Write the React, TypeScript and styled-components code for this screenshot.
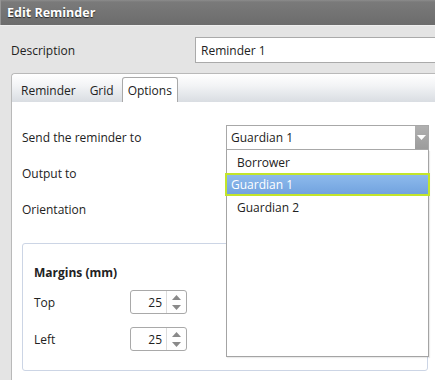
import React from 'react';
import styled, { createGlobalStyle } from 'styled-components';

const Global = createGlobalStyle`
  html, body { margin: 0; padding: 0; }
  body {
    font-family: "Open Sans", "Noto Sans", sans-serif;
    font-size: 12px;
    color: #222;
  }
`;

const Screen = styled.div`
  width: 435px;
  height: 380px;
  overflow: hidden;
  background: #e4e4e4;
  display: flex;
  flex-direction: column;
`;

const TitleBar = styled.div`
  flex: none;
  height: 25px;
  box-sizing: border-box;
  padding-left: 6px;
  display: flex;
  align-items: center;
  background: linear-gradient(#8c8c8c 0, #7a7a7a 2px, #6c6c6c 100%);
  border-left: 1px solid #959595;
  color: #fff;
  font-weight: 700;
  font-size: 12.5px;
  text-shadow: 0 1px 1px rgba(0, 0, 0, 0.65);
`;

const Body = styled.div`
  flex: 1;
  display: flex;
  flex-direction: column;
  padding: 11px 0 0 11px;
  border-top: 1px solid #eeeeee;
`;

const DescRow = styled.div`
  display: flex;
  align-items: center;
  height: 26px;
  flex: none;
`;

const Label = styled.div<{ $w: number }>`
  width: ${(p) => p.$w}px;
  flex: none;
`;

const TextBox = styled.div`
  width: 260px;
  flex: none;
  height: 26px;
  box-sizing: border-box;
  border: 1px solid #aaaaaa;
  border-right: none;
  background: #fff;
  padding-left: 5px;
  display: flex;
  align-items: center;
`;

const TabPanel = styled.div`
  margin-top: 10px;
  width: 440px;
  flex: 1;
  box-sizing: border-box;
  border: 1px solid #b9b9b9;
  border-right: none;
  border-bottom: none;
  border-radius: 4px 0 0 0;
  background: #fff;
  display: flex;
  flex-direction: column;
`;

const TabHeader = styled.div`
  height: 28px;
  flex: none;
  display: flex;
  align-items: flex-end;
  gap: 2px;
  padding-left: 3px;
  background: linear-gradient(#ffffff 0%, #f3f4f6 40%, #d9dde2 100%);
  border-radius: 4px 0 0 0;
`;

const Tab = styled.div<{ $active?: boolean }>`
  height: 25px;
  box-sizing: border-box;
  padding: 0 5px;
  display: flex;
  align-items: center;
  border: 1px solid ${(p) => (p.$active ? '#a9a9a9' : 'transparent')};
  border-bottom: none;
  border-radius: 3px 3px 0 0;
  background: ${(p) => (p.$active ? '#fff' : 'transparent')};
`;

const Content = styled.div`
  padding: 23px 0 0 10px;
  display: flex;
  flex-direction: column;
`;

const FormRow = styled.div<{ $gap: number }>`
  display: flex;
  align-items: center;
  height: 24px;
  margin-top: ${(p) => p.$gap}px;
  position: relative;
  z-index: ${(p) => (p.$gap === 0 ? 2 : 1)};
`;

const SelectWrap = styled.div`
  position: relative;
  width: 203px;
  height: 25px;
  align-self: flex-start;
`;

const SelectBox = styled.div`
  height: 25px;
  box-sizing: border-box;
  border: 1px solid #a8a8a8;
  background: #fff;
  display: flex;
  align-items: center;
  padding-left: 4px;
`;

const SelectText = styled.div`
  flex: 1;
`;

const ArrowButton = styled.div`
  width: 13px;
  align-self: stretch;
  background: linear-gradient(#b0b0b0, #9c9c9c);
  display: flex;
  align-items: center;
  justify-content: center;
`;

const DropList = styled.div`
  position: absolute;
  top: 25px;
  left: 0;
  width: 203px;
  height: 207px;
  box-sizing: border-box;
  border: 1px solid #a4a4a4;
  border-top: none;
  background: #fff;
  padding-top: 1px;
  display: flex;
  flex-direction: column;
  box-shadow: 1px 1px 1px rgba(0, 0, 0, 0.08);
`;

const Item = styled.div<{ $selected?: boolean }>`
  display: flex;
  align-items: center;
  box-sizing: border-box;
  ${(p) =>
    p.$selected
      ? `
    height: 23px;
    margin: 0 -2px;
    padding-left: 4px;
    border: 2px solid #c3e52b;
    background: linear-gradient(#8dbaec, #72a3df);
    color: #fff;
  `
      : `
    height: 22px;
    padding-left: 10px;
  `}
`;

const GroupBox = styled.div`
  margin-top: 22px;
  width: 406px;
  height: 128px;
  box-sizing: border-box;
  border: 1px solid #ccd5e5;
  border-radius: 3px;
  padding: 21px 0 0 11px;
  display: flex;
  flex-direction: column;
`;

const GroupTitle = styled.div`
  font-weight: 700;
  height: 16px;
  line-height: 16px;
`;

const SpinRow = styled.div<{ $gap: number }>`
  display: flex;
  align-items: center;
  height: 24px;
  margin-top: ${(p) => p.$gap}px;
`;

const Spinner = styled.div`
  width: 57px;
  height: 24px;
  box-sizing: border-box;
  border: 1px solid #a9a9a9;
  border-radius: 3px;
  display: flex;
  background: #fff;
`;

const SpinValue = styled.div`
  flex: 1;
  display: flex;
  align-items: center;
  justify-content: flex-end;
  padding-right: 4px;
`;

const SpinArrows = styled.div`
  width: 19px;
  border-left: 1px solid #dcdcdc;
  display: flex;
  flex-direction: column;
  align-items: center;
  justify-content: center;
  gap: 5px;
`;

const Tri = ({ up, color }: { up?: boolean; color: string }) => (
  <svg width="9" height="5" viewBox="0 0 9 5">
    <polygon points={up ? '0,5 4.5,0 9,5' : '0,0 9,0 4.5,5'} fill={color} />
  </svg>
);

export default function App() {
  return (
    <>
      <Global />
      <Screen>
        <TitleBar>Edit Reminder</TitleBar>
        <Body>
          <DescRow>
            <Label $w={184}>Description</Label>
            <TextBox>Reminder 1</TextBox>
          </DescRow>
          <TabPanel>
            <TabHeader>
              <Tab>Reminder</Tab>
              <Tab>Grid</Tab>
              <Tab $active>Options</Tab>
            </TabHeader>
            <Content>
              <FormRow $gap={0}>
                <Label $w={204}>Send the reminder to</Label>
                <SelectWrap>
                  <SelectBox>
                    <SelectText>Guardian 1</SelectText>
                    <ArrowButton>
                      <Tri color="#fff" />
                    </ArrowButton>
                  </SelectBox>
                  <DropList>
                    <Item>Borrower</Item>
                    <Item $selected>Guardian 1</Item>
                    <Item>Guardian 2</Item>
                  </DropList>
                </SelectWrap>
              </FormRow>
              <FormRow $gap={12}>
                <Label $w={204}>Output to</Label>
              </FormRow>
              <FormRow $gap={12}>
                <Label $w={204}>Orientation</Label>
              </FormRow>
              <GroupBox>
                <GroupTitle>Margins (mm)</GroupTitle>
                <SpinRow $gap={9}>
                  <Label $w={96}>Top</Label>
                  <Spinner>
                    <SpinValue>25</SpinValue>
                    <SpinArrows>
                      <Tri up color="#8a8a8a" />
                      <Tri color="#8a8a8a" />
                    </SpinArrows>
                  </Spinner>
                </SpinRow>
                <SpinRow $gap={13}>
                  <Label $w={96}>Left</Label>
                  <Spinner>
                    <SpinValue>25</SpinValue>
                    <SpinArrows>
                      <Tri up color="#8a8a8a" />
                      <Tri color="#8a8a8a" />
                    </SpinArrows>
                  </Spinner>
                </SpinRow>
              </GroupBox>
            </Content>
          </TabPanel>
        </Body>
      </Screen>
    </>
  );
}
